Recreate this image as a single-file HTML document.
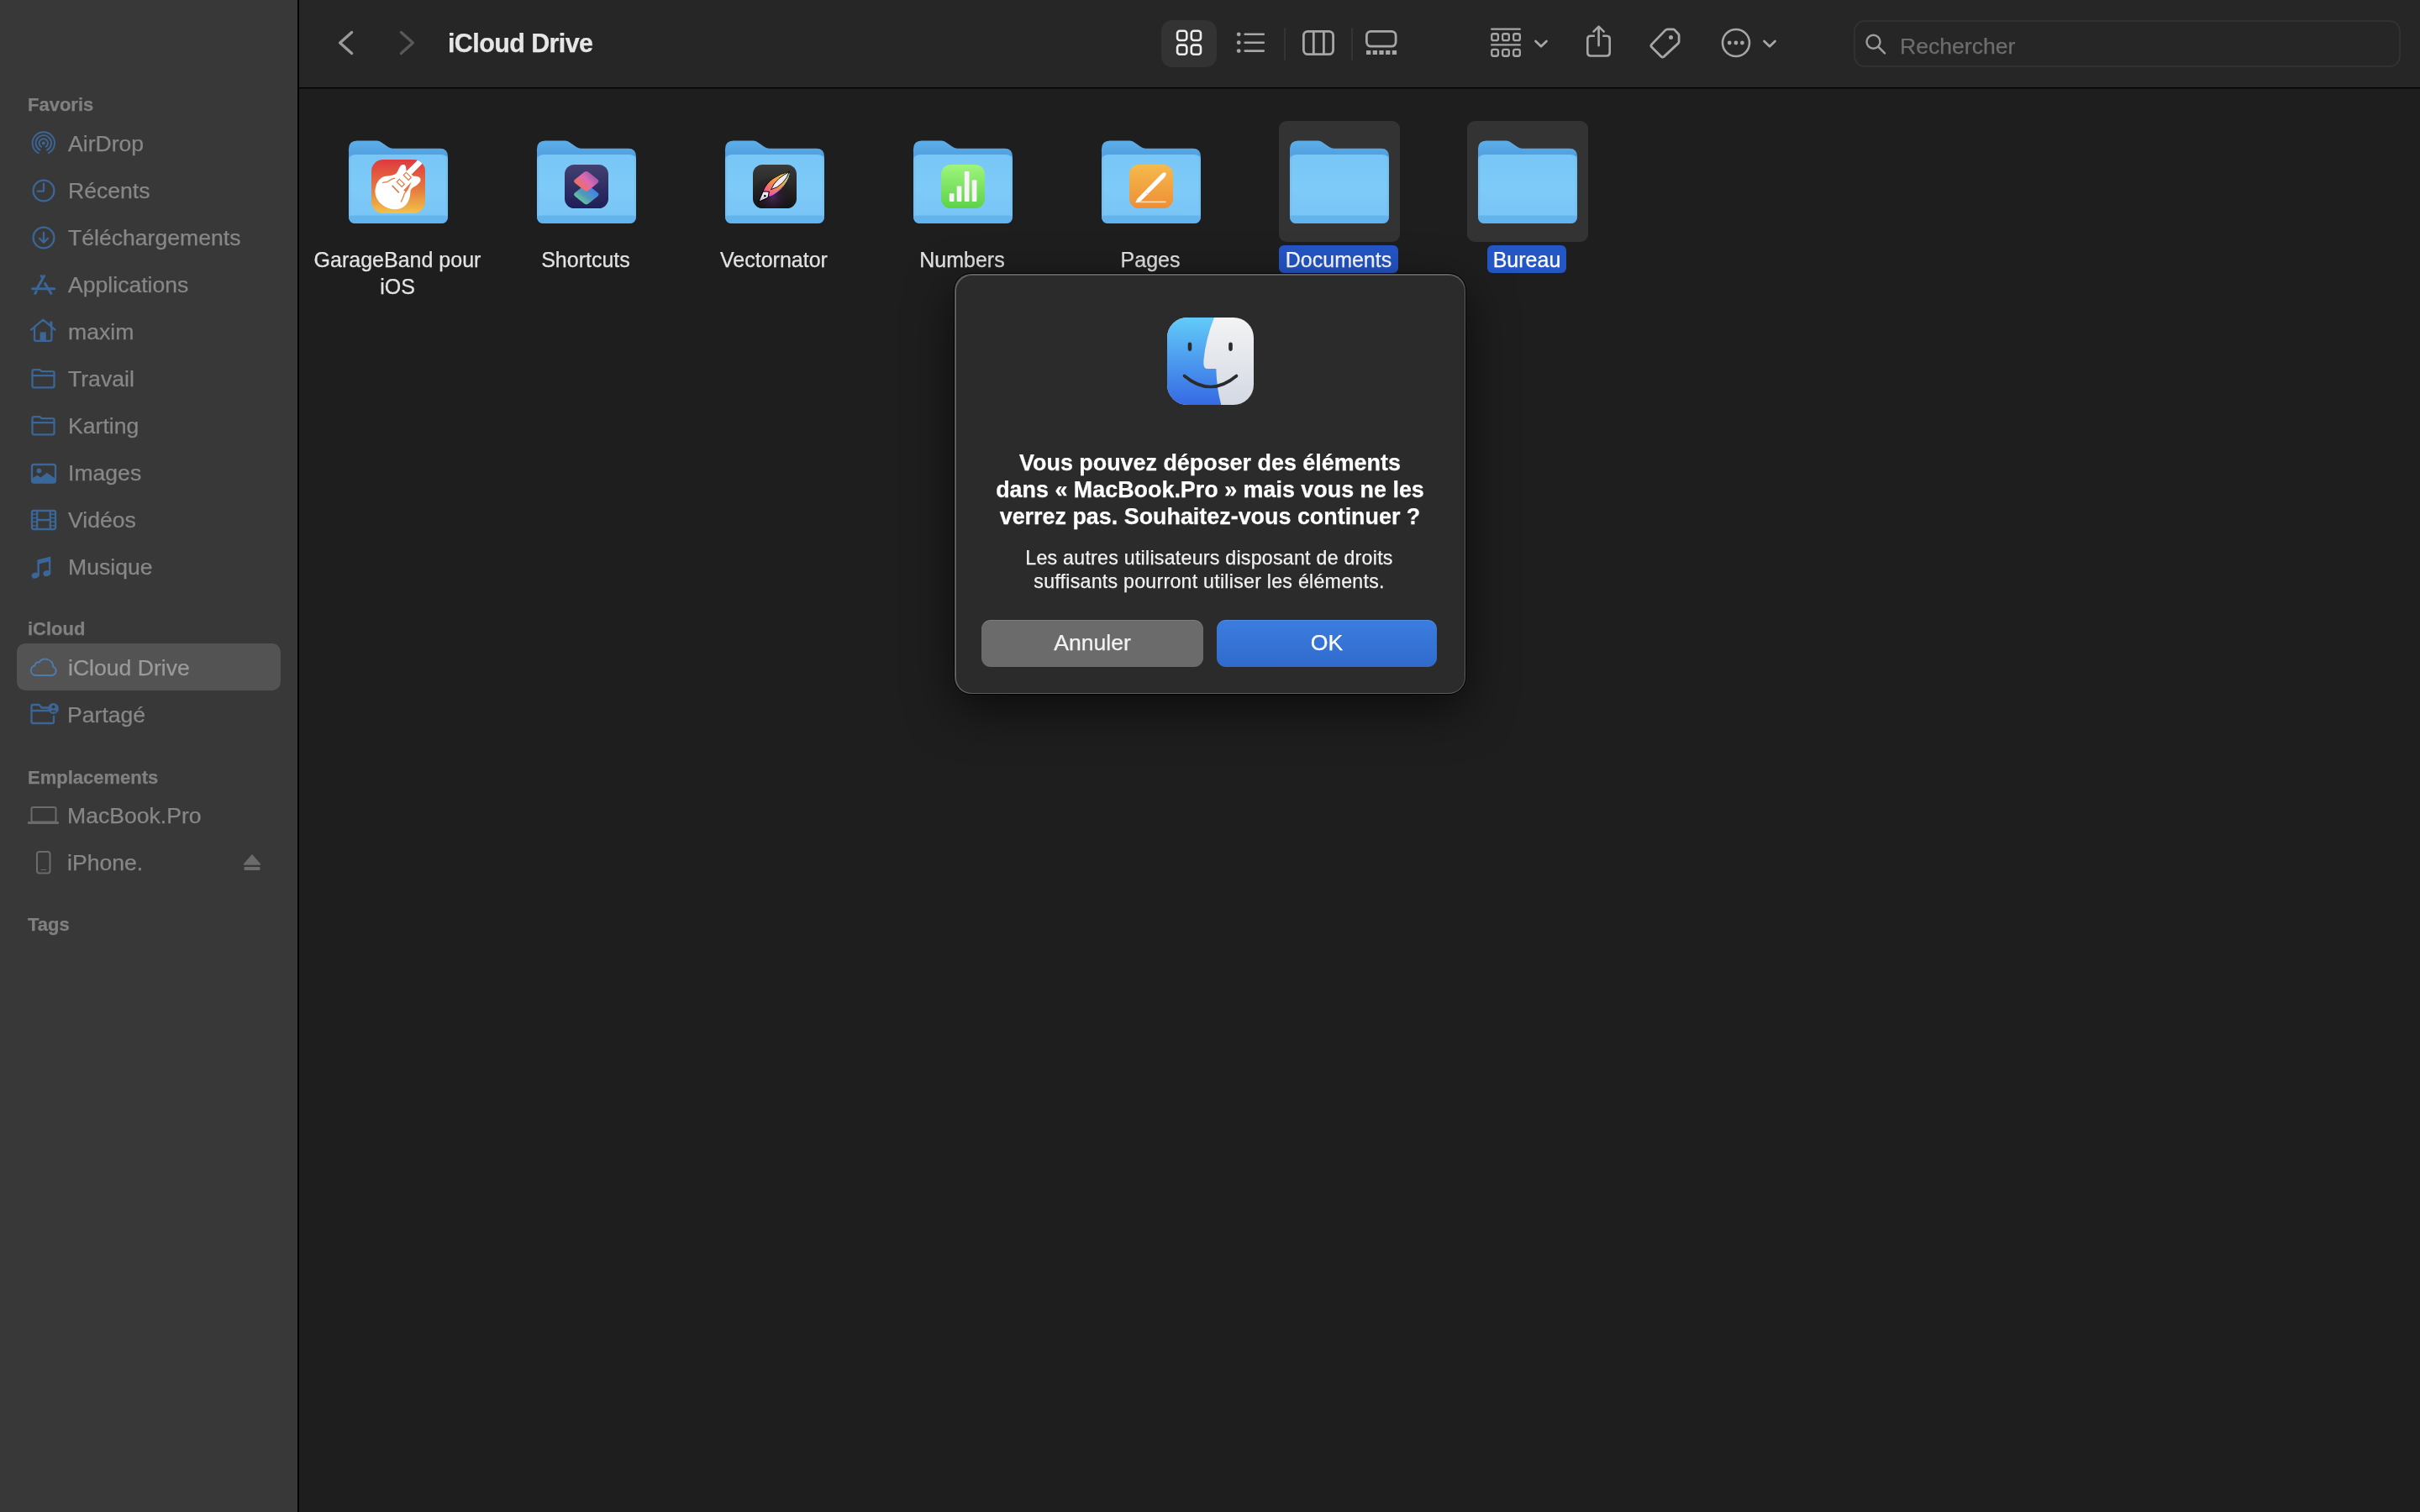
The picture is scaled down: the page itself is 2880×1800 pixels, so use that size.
<!DOCTYPE html>
<html><head><meta charset="utf-8"><title>Finder - iCloud Drive</title>
<style>
html,body{margin:0;padding:0;}
body{width:2880px;height:1800px;position:relative;overflow:hidden;background:#1e1e1e;font-family:"Liberation Sans", sans-serif;}
.t{position:absolute;white-space:nowrap;will-change:transform;-webkit-text-stroke:0.25px currentColor;}
svg{overflow:visible}
</style></head><body>
<div id="sidebar" style="position:absolute;left:0;top:0;width:354px;height:1800px;background:#383838"></div>
<div style="position:absolute;left:354px;top:0;width:2px;height:1800px;background:#000"></div>
<div style="position:absolute;left:20px;top:766px;width:314px;height:56px;border-radius:10px;background:#535353"></div>
<div class="t" style="left:33px;top:114.38px;font-size:22px;line-height:22px;color:#808080;font-weight:700;">Favoris</div>
<div class="t" style="left:81px;top:158.48px;font-size:26.6px;line-height:26.6px;color:#878787;">AirDrop</div>
<div class="t" style="left:81px;top:214.48px;font-size:26.6px;line-height:26.6px;color:#878787;">Récents</div>
<div class="t" style="left:81px;top:270.48px;font-size:26.6px;line-height:26.6px;color:#878787;">Téléchargements</div>
<div class="t" style="left:81px;top:326.48px;font-size:26.6px;line-height:26.6px;color:#878787;">Applications</div>
<div class="t" style="left:81px;top:382.48px;font-size:26.6px;line-height:26.6px;color:#878787;">maxim</div>
<div class="t" style="left:81px;top:438.48px;font-size:26.6px;line-height:26.6px;color:#878787;">Travail</div>
<div class="t" style="left:81px;top:494.48px;font-size:26.6px;line-height:26.6px;color:#878787;">Karting</div>
<div class="t" style="left:81px;top:550.48px;font-size:26.6px;line-height:26.6px;color:#878787;">Images</div>
<div class="t" style="left:81px;top:606.48px;font-size:26.6px;line-height:26.6px;color:#878787;">Vidéos</div>
<div class="t" style="left:81px;top:662.48px;font-size:26.6px;line-height:26.6px;color:#878787;">Musique</div>
<div class="t" style="left:33px;top:738.38px;font-size:22px;line-height:22px;color:#808080;font-weight:700;">iCloud</div>
<div class="t" style="left:80.5px;top:782.48px;font-size:26.6px;line-height:26.6px;color:#9a9a9a;">iCloud Drive</div>
<div class="t" style="left:80px;top:837.98px;font-size:26.6px;line-height:26.6px;color:#878787;">Partagé</div>
<div class="t" style="left:33px;top:915.38px;font-size:22px;line-height:22px;color:#808080;font-weight:700;">Emplacements</div>
<div class="t" style="left:80px;top:958.48px;font-size:26.6px;line-height:26.6px;color:#878787;">MacBook.Pro</div>
<div class="t" style="left:80px;top:1014.48px;font-size:26.6px;line-height:26.6px;color:#878787;">iPhone.</div>
<div class="t" style="left:33px;top:1090.38px;font-size:22px;line-height:22px;color:#808080;font-weight:700;">Tags</div>
<svg style="position:absolute;left:0;top:0" width="354" height="1200" viewBox="0 0 354 1200"><g fill="none" stroke="#3b6698" stroke-width="1.9" stroke-linecap="round"><path d="M45.81,182.16 A13.2,13.2 0 1 1 57.79,182.16"/><path d="M47.60,178.64 A9.25,9.25 0 1 1 56.00,178.64"/><path d="M49.04,174.81 A5.2,5.2 0 1 1 54.56,174.81"/></g><circle cx="51.8" cy="170.4" r="2" fill="#3b6698"/><g fill="none" stroke="#3b6698" stroke-width="2.3" stroke-linecap="round" stroke-linejoin="round" stroke-width="1.9"><circle cx="52" cy="227" r="12.4"/><path d="M52,218.6 V227.6 H44.6"/></g><g fill="none" stroke="#3b6698" stroke-width="2.3" stroke-linecap="round" stroke-linejoin="round" stroke-width="1.9"><circle cx="52" cy="283" r="12.4"/><path d="M52,276.8 V288.8 M47,283.8 L52,288.8 L57,283.8"/></g><g fill="none" stroke="#3b6698" stroke-width="3" stroke-linecap="round"><path d="M52.6,328.6 L44.9,342"/><path d="M43.3,346.8 L41.8,349.4"/><path d="M49.2,328.6 L50.4,330.8 M53.6,337.6 L60.8,349.4"/><path d="M38.6,343.7 H64.8"/></g><g fill="none" stroke="#3b6698" stroke-width="2.3" stroke-linecap="round" stroke-linejoin="round" stroke-width="2"><path d="M37,392.6 L51.3,380.6 L65.5,392.6"/><path d="M41,389.4 V403.8 Q41,405.8 43,405.8 H59.4 Q61.4,405.8 61.4,403.8 V389.4"/></g><rect x="59.2" y="382.6" width="3.2" height="6.8" fill="#3b6698"/><rect x="47.6" y="395.4" width="7.2" height="10.4" fill="#3b6698"/><g fill="none" stroke="#3b6698" stroke-width="2.3" stroke-linecap="round" stroke-linejoin="round" stroke-width="2"><path d="M38.5,459.3 V442.2 Q38.5,440.2 40.5,440.2 H46.5 Q47.6,440.2 48.4,441 L49.2,441.8 Q50,442.2 51,442.2 H62.5 Q64.5,442.2 64.5,444.2 V459.3 Q64.5,461.3 62.5,461.3 H40.5 Q38.5,461.3 38.5,459.3 Z"/><path d="M38.5,447.1 H64.5"/></g><g fill="none" stroke="#3b6698" stroke-width="2.3" stroke-linecap="round" stroke-linejoin="round" stroke-width="2"><path d="M38.5,515.3 V498.2 Q38.5,496.2 40.5,496.2 H46.5 Q47.6,496.2 48.4,497 L49.2,497.8 Q50,498.2 51,498.2 H62.5 Q64.5,498.2 64.5,500.2 V515.3 Q64.5,517.3 62.5,517.3 H40.5 Q38.5,517.3 38.5,515.3 Z"/><path d="M38.5,503.1 H64.5"/></g><g fill="none" stroke="#3b6698" stroke-width="2.3" stroke-linecap="round" stroke-linejoin="round" stroke-width="2.1"><rect x="38" y="553" width="28" height="21.5" rx="2.5"/></g><circle cx="46.4" cy="560.4" r="2.9" fill="#3b6698"/><path d="M38,569.5 L44.4,565.8 L48.4,568.4 L55.8,562.8 L66,569.8 V572 Q66,575 63.5,575 H40.5 Q38,575 38,572 Z" fill="#3b6698"/><g fill="none" stroke="#3b6698" stroke-width="2.3" stroke-linecap="round" stroke-linejoin="round" stroke-width="1.9"><rect x="38" y="608" width="28" height="22" rx="2"/><path d="M44.2,608 V630 M59.8,608 V630 M44.2,619 H59.8"/></g><rect x="39" y="611.45" width="4.5" height="1.5" fill="#3b6698"/><rect x="60.5" y="611.45" width="4.5" height="1.5" fill="#3b6698"/><rect x="39" y="615.85" width="4.5" height="1.5" fill="#3b6698"/><rect x="60.5" y="615.85" width="4.5" height="1.5" fill="#3b6698"/><rect x="39" y="620.45" width="4.5" height="1.5" fill="#3b6698"/><rect x="60.5" y="620.45" width="4.5" height="1.5" fill="#3b6698"/><rect x="39" y="625.05" width="4.5" height="1.5" fill="#3b6698"/><rect x="60.5" y="625.05" width="4.5" height="1.5" fill="#3b6698"/><path d="M44.4,666.5 L60.3,662.6 V684 H58 V668.6 L46.9,671.2 V686 H44.4 Z" fill="#3b6698"/><ellipse cx="41.9" cy="685.2" rx="4.3" ry="3.5" transform="rotate(-15 41.9 685.2)" fill="#3b6698"/><ellipse cx="55.6" cy="682.6" rx="4.3" ry="3.5" transform="rotate(-15 55.6 682.6)" fill="#3b6698"/><path d="M42.4,804 H61.6 A5.4,5.4 0 0 0 63.2,793.6 A9.1,9.1 0 0 0 46.6,788.6 A3.7,3.7 0 0 0 41.6,792.5 A5.8,5.8 0 0 0 42.4,804 Z" fill="none" stroke="#4e7ab0" stroke-width="1.9" stroke-linejoin="round"/><g fill="none" stroke="#3b6698" stroke-width="2.3" stroke-linecap="round" stroke-linejoin="round" stroke-width="2.1"><path d="M37.5,859 V841 Q37.5,839 39.5,839 H46.5 L49.5,842.5 H57"/><path d="M37.5,846 H57"/><path d="M37.5,859 Q37.5,861 39.5,861 H62 Q64,861 64,859 V853"/></g><circle cx="63.5" cy="843.5" r="6.5" fill="#3b6698"/><circle cx="63.5" cy="841.5" r="2" fill="#383838"/><path d="M59.8,847.5 Q63.5,843.5 67.2,847.5" fill="#383838"/><rect x="37.5" y="961" width="29" height="17.5" rx="2" fill="none" stroke="#6b6b6b" stroke-width="2"/><rect x="33" y="978" width="37" height="3" rx="1" fill="#6b6b6b"/><rect x="44" y="1014" width="15.5" height="25.5" rx="3" fill="none" stroke="#6b6b6b" stroke-width="2"/><rect x="48.5" y="1035" width="6.5" height="1" fill="#6b6b6b"/><path d="M290.5,1029 L300,1018 L309.5,1029 Z" fill="#6b6b6b" stroke="#6b6b6b" stroke-width="1.5" stroke-linejoin="round"/><rect x="290.5" y="1032" width="19" height="4" rx="1" fill="#6b6b6b"/></svg>
<div style="position:absolute;left:356px;top:0;width:2524px;height:104px;background:#262626"></div>
<div style="position:absolute;left:356px;top:104px;width:2524px;height:1px;background:#000"></div><div style="position:absolute;left:356px;top:105px;width:2524px;height:1px;background:#111"></div>
<svg style="position:absolute;left:0;top:0" width="2880" height="104" viewBox="0 0 2880 104"><path d="M418.6,38.4 L404.6,51 L418.6,63.6" fill="none" stroke="#9a9a9a" stroke-width="3.3" stroke-linecap="round" stroke-linejoin="round"/><path d="M477.4,38.4 L491.4,51 L477.4,63.6" fill="none" stroke="#595959" stroke-width="3.3" stroke-linecap="round" stroke-linejoin="round"/><rect x="1382" y="24" width="66" height="56" rx="13" fill="#333333"/><g fill="none" stroke="#ececec" stroke-width="2.6"><rect x="1401.1" y="36.8" width="11.2" height="11.2" rx="3"/><rect x="1417.8" y="36.8" width="11.2" height="11.2" rx="3"/><rect x="1401.1" y="53.6" width="11.2" height="11.2" rx="3"/><rect x="1417.8" y="53.6" width="11.2" height="11.2" rx="3"/></g><g fill="#a6a6a6"><circle cx="1474.2" cy="40.8" r="2.4"/><circle cx="1474.2" cy="50.7" r="2.4"/><circle cx="1474.2" cy="60.6" r="2.4"/></g><g stroke="#a6a6a6" stroke-width="2.6" stroke-linecap="round"><path d="M1481.7,40.8 H1503.8 M1481.7,50.7 H1503.8 M1481.7,60.6 H1503.8"/></g><rect x="1528.3" y="33" width="1.5" height="38.5" fill="#3a3a3a"/><rect x="1608.3" y="33" width="1.5" height="38.5" fill="#3a3a3a"/><g fill="none" stroke="#a6a6a6" stroke-width="2.8"><rect x="1551.4" y="37.4" width="35.2" height="27.2" rx="5"/><path d="M1563.3,37.4 V64.6 M1575.4,37.4 V64.6"/></g><rect x="1626.4" y="37.4" width="34.7" height="17.7" rx="5" fill="none" stroke="#a6a6a6" stroke-width="2.8"/><rect x="1626.0" y="60" width="5.3" height="5" fill="#a6a6a6"/><rect x="1633.7" y="60" width="5.3" height="5" fill="#a6a6a6"/><rect x="1641.4" y="60" width="5.3" height="5" fill="#a6a6a6"/><rect x="1649.1" y="60" width="5.3" height="5" fill="#a6a6a6"/><rect x="1656.8" y="60" width="5.3" height="5" fill="#a6a6a6"/><g stroke="#a6a6a6" stroke-width="2.4" fill="none" stroke-linecap="round"><path d="M1775.2,34.6 H1808.8 M1775.2,53.4 H1808.8"/></g><g stroke="#a6a6a6" stroke-width="2.3" fill="none"><rect x="1775.25" y="40.25" width="7.7" height="7.85" rx="2.2"/><rect x="1775.25" y="58.90" width="7.7" height="7.85" rx="2.2"/><rect x="1788.15" y="40.25" width="7.7" height="7.85" rx="2.2"/><rect x="1788.15" y="58.90" width="7.7" height="7.85" rx="2.2"/><rect x="1801.15" y="40.25" width="7.7" height="7.85" rx="2.2"/><rect x="1801.15" y="58.90" width="7.7" height="7.85" rx="2.2"/></g><path d="M1827.5,49 L1834,55.3 L1840.5,49" fill="none" stroke="#a6a6a6" stroke-width="2.8" stroke-linecap="round" stroke-linejoin="round"/><g fill="none" stroke="#a6a6a6" stroke-width="2.6" stroke-linejoin="round"><path d="M1897.9,42.7 H1893 Q1889.3,42.7 1889.3,46.4 V62.8 Q1889.3,66.5 1893,66.5 H1912 Q1915.7,66.5 1915.7,62.8 V46.4 Q1915.7,42.7 1912,42.7 H1907.2"/></g><g fill="none" stroke="#a6a6a6" stroke-width="2.6" stroke-linecap="round" stroke-linejoin="round"><path d="M1902.6,54.2 V32.6 M1896.5,37.6 L1902.6,31.6 L1908.7,37.6"/></g><path d="M1984.5,34.8 H1990.9 Q1992.1,34.8 1992.9,35.6 L1997.3,40.2 Q1998.1,41 1998.1,42.2 V49.6 Q1998.1,50.8 1997.2,51.6 L1980.2,67.4 Q1978.5,68.9 1976.9,67.3 L1965.6,56.1 Q1964.1,54.5 1965.6,52.9 L1982,35.9 Q1983,34.8 1984.5,34.8 Z" fill="none" stroke="#a6a6a6" stroke-width="2.8" stroke-linejoin="round"/><circle cx="1988.5" cy="44.5" r="2.5" fill="#a6a6a6"/><circle cx="2066" cy="51" r="16" fill="none" stroke="#a6a6a6" stroke-width="2.6"/><g fill="#a6a6a6"><circle cx="2058.2" cy="51" r="2.4"/><circle cx="2065.9" cy="51" r="2.4"/><circle cx="2073.4" cy="51" r="2.4"/></g><path d="M2099.5,49 L2106,55.3 L2112.5,49" fill="none" stroke="#a6a6a6" stroke-width="2.8" stroke-linecap="round" stroke-linejoin="round"/><rect x="2207" y="25" width="649" height="54" rx="12" fill="#262626" stroke="#363636" stroke-width="1.5"/><circle cx="2229.5" cy="49.8" r="8" fill="none" stroke="#9c9c9c" stroke-width="2.4"/><path d="M2235.5,55.8 L2243,63.3" stroke="#9c9c9c" stroke-width="2.6" stroke-linecap="round"/></svg>
<div class="t" style="left:533px;top:36.18px;font-size:30.5px;line-height:30.5px;color:#e6e6e6;font-weight:700;letter-spacing:-0.6px;">iCloud Drive</div>
<div class="t" style="left:2261px;top:42.48px;font-size:26.6px;line-height:26.6px;color:#6d6d6d;">Rechercher</div>
<div style="position:absolute;left:1522px;top:144px;width:144px;height:144px;border-radius:9px;background:#333333"></div>
<div style="position:absolute;left:1746px;top:144px;width:144px;height:144px;border-radius:9px;background:#333333"></div>
<div style="position:absolute;left:1522px;top:292px;width:142px;height:33px;border-radius:6px;background:#2456c6"></div>
<div style="position:absolute;left:1770px;top:292px;width:94px;height:33px;border-radius:6px;background:#2456c6"></div>
<svg style="position:absolute;left:0;top:0" width="2880" height="330" viewBox="0 0 2880 330"><defs><linearGradient id="fback" x1="0" y1="0" x2="0" y2="1"><stop offset="0" stop-color="#5eaee8"/><stop offset="1" stop-color="#3f8fdb"/></linearGradient><linearGradient id="ffront" x1="0" y1="0" x2="0" y2="1"><stop offset="0" stop-color="#78c6f6"/><stop offset="0.5" stop-color="#7ecbf9"/><stop offset="1" stop-color="#76c3f5"/></linearGradient><linearGradient id="gb" x1="0" y1="0" x2="0" y2="1"><stop offset="0" stop-color="#e0393f"/><stop offset="0.55" stop-color="#e57a3e"/><stop offset="1" stop-color="#f2c24b"/></linearGradient><linearGradient id="sc" x1="0" y1="0" x2="0" y2="1"><stop offset="0" stop-color="#424170"/><stop offset="1" stop-color="#1f1d58"/></linearGradient><linearGradient id="sc1" x1="0.1" y1="0.8" x2="0.9" y2="0.2"><stop offset="0" stop-color="#f0704a"/><stop offset="0.55" stop-color="#e068b4"/><stop offset="1" stop-color="#8e5aa8"/></linearGradient><linearGradient id="sc2" x1="0.2" y1="1" x2="0.9" y2="0.3"><stop offset="0" stop-color="#70d890"/><stop offset="0.5" stop-color="#4f9ab8"/><stop offset="1" stop-color="#3f80f2"/></linearGradient><linearGradient id="vn" x1="0" y1="0" x2="0" y2="1"><stop offset="0" stop-color="#3a3a3a"/><stop offset="1" stop-color="#151515"/></linearGradient><linearGradient id="vnf" x1="0" y1="1" x2="1" y2="0"><stop offset="0" stop-color="#f040c0"/><stop offset="0.45" stop-color="#f08a50"/><stop offset="0.75" stop-color="#f0e040"/><stop offset="1" stop-color="#60e0f0"/></linearGradient><linearGradient id="nm" x1="0" y1="0" x2="0" y2="1"><stop offset="0" stop-color="#9ff57c"/><stop offset="1" stop-color="#5cd24a"/></linearGradient><linearGradient id="pg" x1="0" y1="0" x2="0" y2="1"><stop offset="0" stop-color="#f5ba4c"/><stop offset="1" stop-color="#ef8e35"/></linearGradient></defs><g transform="translate(415,167)"><path d="M0,10.6 Q0,0.6 10,0.6 H33.5 Q36.5,0.6 39,2.4 L47,8.1 Q49.5,9.8 52.5,9.8 H108.5 Q118,9.8 118,19.3 V40 H0 Z" fill="url(#fback)"/><path d="M0,25 Q0,16.9 8,16.9 H110 Q118,16.9 118,25 V90.5 Q118,99 109.5,99 H8.5 Q0,99 0,90.5 Z" fill="url(#ffront)"/><path d="M0,88.3 H118 V90.5 Q118,99 109.5,99 H8.5 Q0,99 0,90.5 Z" fill="#5eb0ec" opacity="0.85"/><rect x="0" y="88.3" width="118" height="1.2" fill="#86cdf6" opacity="0.8"/><rect x="0" y="19" width="2.5" height="69" fill="#6dbcf2" opacity="0.5"/><rect x="115.5" y="19" width="2.5" height="69" fill="#6dbcf2" opacity="0.5"/></g><g transform="translate(639,167)"><path d="M0,10.6 Q0,0.6 10,0.6 H33.5 Q36.5,0.6 39,2.4 L47,8.1 Q49.5,9.8 52.5,9.8 H108.5 Q118,9.8 118,19.3 V40 H0 Z" fill="url(#fback)"/><path d="M0,25 Q0,16.9 8,16.9 H110 Q118,16.9 118,25 V90.5 Q118,99 109.5,99 H8.5 Q0,99 0,90.5 Z" fill="url(#ffront)"/><path d="M0,88.3 H118 V90.5 Q118,99 109.5,99 H8.5 Q0,99 0,90.5 Z" fill="#5eb0ec" opacity="0.85"/><rect x="0" y="88.3" width="118" height="1.2" fill="#86cdf6" opacity="0.8"/><rect x="0" y="19" width="2.5" height="69" fill="#6dbcf2" opacity="0.5"/><rect x="115.5" y="19" width="2.5" height="69" fill="#6dbcf2" opacity="0.5"/></g><g transform="translate(863,167)"><path d="M0,10.6 Q0,0.6 10,0.6 H33.5 Q36.5,0.6 39,2.4 L47,8.1 Q49.5,9.8 52.5,9.8 H108.5 Q118,9.8 118,19.3 V40 H0 Z" fill="url(#fback)"/><path d="M0,25 Q0,16.9 8,16.9 H110 Q118,16.9 118,25 V90.5 Q118,99 109.5,99 H8.5 Q0,99 0,90.5 Z" fill="url(#ffront)"/><path d="M0,88.3 H118 V90.5 Q118,99 109.5,99 H8.5 Q0,99 0,90.5 Z" fill="#5eb0ec" opacity="0.85"/><rect x="0" y="88.3" width="118" height="1.2" fill="#86cdf6" opacity="0.8"/><rect x="0" y="19" width="2.5" height="69" fill="#6dbcf2" opacity="0.5"/><rect x="115.5" y="19" width="2.5" height="69" fill="#6dbcf2" opacity="0.5"/></g><g transform="translate(1087,167)"><path d="M0,10.6 Q0,0.6 10,0.6 H33.5 Q36.5,0.6 39,2.4 L47,8.1 Q49.5,9.8 52.5,9.8 H108.5 Q118,9.8 118,19.3 V40 H0 Z" fill="url(#fback)"/><path d="M0,25 Q0,16.9 8,16.9 H110 Q118,16.9 118,25 V90.5 Q118,99 109.5,99 H8.5 Q0,99 0,90.5 Z" fill="url(#ffront)"/><path d="M0,88.3 H118 V90.5 Q118,99 109.5,99 H8.5 Q0,99 0,90.5 Z" fill="#5eb0ec" opacity="0.85"/><rect x="0" y="88.3" width="118" height="1.2" fill="#86cdf6" opacity="0.8"/><rect x="0" y="19" width="2.5" height="69" fill="#6dbcf2" opacity="0.5"/><rect x="115.5" y="19" width="2.5" height="69" fill="#6dbcf2" opacity="0.5"/></g><g transform="translate(1311,167)"><path d="M0,10.6 Q0,0.6 10,0.6 H33.5 Q36.5,0.6 39,2.4 L47,8.1 Q49.5,9.8 52.5,9.8 H108.5 Q118,9.8 118,19.3 V40 H0 Z" fill="url(#fback)"/><path d="M0,25 Q0,16.9 8,16.9 H110 Q118,16.9 118,25 V90.5 Q118,99 109.5,99 H8.5 Q0,99 0,90.5 Z" fill="url(#ffront)"/><path d="M0,88.3 H118 V90.5 Q118,99 109.5,99 H8.5 Q0,99 0,90.5 Z" fill="#5eb0ec" opacity="0.85"/><rect x="0" y="88.3" width="118" height="1.2" fill="#86cdf6" opacity="0.8"/><rect x="0" y="19" width="2.5" height="69" fill="#6dbcf2" opacity="0.5"/><rect x="115.5" y="19" width="2.5" height="69" fill="#6dbcf2" opacity="0.5"/></g><g transform="translate(1535,167)"><path d="M0,10.6 Q0,0.6 10,0.6 H33.5 Q36.5,0.6 39,2.4 L47,8.1 Q49.5,9.8 52.5,9.8 H108.5 Q118,9.8 118,19.3 V40 H0 Z" fill="url(#fback)"/><path d="M0,25 Q0,16.9 8,16.9 H110 Q118,16.9 118,25 V90.5 Q118,99 109.5,99 H8.5 Q0,99 0,90.5 Z" fill="url(#ffront)"/><path d="M0,88.3 H118 V90.5 Q118,99 109.5,99 H8.5 Q0,99 0,90.5 Z" fill="#5eb0ec" opacity="0.85"/><rect x="0" y="88.3" width="118" height="1.2" fill="#86cdf6" opacity="0.8"/><rect x="0" y="19" width="2.5" height="69" fill="#6dbcf2" opacity="0.5"/><rect x="115.5" y="19" width="2.5" height="69" fill="#6dbcf2" opacity="0.5"/></g><g transform="translate(1759,167)"><path d="M0,10.6 Q0,0.6 10,0.6 H33.5 Q36.5,0.6 39,2.4 L47,8.1 Q49.5,9.8 52.5,9.8 H108.5 Q118,9.8 118,19.3 V40 H0 Z" fill="url(#fback)"/><path d="M0,25 Q0,16.9 8,16.9 H110 Q118,16.9 118,25 V90.5 Q118,99 109.5,99 H8.5 Q0,99 0,90.5 Z" fill="url(#ffront)"/><path d="M0,88.3 H118 V90.5 Q118,99 109.5,99 H8.5 Q0,99 0,90.5 Z" fill="#5eb0ec" opacity="0.85"/><rect x="0" y="88.3" width="118" height="1.2" fill="#86cdf6" opacity="0.8"/><rect x="0" y="19" width="2.5" height="69" fill="#6dbcf2" opacity="0.5"/><rect x="115.5" y="19" width="2.5" height="69" fill="#6dbcf2" opacity="0.5"/></g><clipPath id="gbc"><rect width="64" height="64" rx="14"/></clipPath><g transform="translate(442,190)"><rect width="64" height="64" rx="14" fill="url(#gb)"/><g clip-path="url(#gbc)"><path d="M43,17.5 L66,-5.5" stroke="#fff" stroke-width="6.8"/></g><path d="M50.3,19.8 C53,19.5 57.5,19.8 58.4,22.9 C59.2,26.2 56,29.2 50.5,32.6 C47.2,34.6 46.6,36.2 46.4,38.4 C46.1,44.5 45,50.2 39.3,55.6 C33.6,60.6 21.5,61.2 12.2,53.3 C4,46.2 3.2,37.8 5.8,30.2 C8,24.2 12,20.2 17.5,19.7 C22.5,19.3 26.5,18.8 29.2,16.8 C31.4,14.8 32.2,11 34.4,7.8 C36.2,5.4 39.2,5.3 40.4,7.2 C41.6,9.2 41.1,12.1 41.8,13.8 Z" fill="#fff"/><g fill="none" stroke="#e6773f" stroke-width="1.2"><rect x="38.6" y="17.6" width="8.4" height="4.4" transform="rotate(45 42.8 19.8)"/><rect x="30.6" y="25.6" width="8.4" height="4.4" transform="rotate(45 34.8 27.8)"/><path d="M13.2,27.8 Q15,26.6 17.5,27 Q20.5,26 22.5,24.3 Q25.5,22 28,22.4" stroke-width="1.3"/><path d="M35.4,50.6 Q35.6,48.5 37,46.8 Q38.2,44 38.8,41.6 Q39.6,39.4 40.8,38.8" stroke-width="1.3"/></g><path d="M25.2,31.4 L32.4,39" stroke="#e6773f" stroke-width="1.7" stroke-linecap="round"/><path d="M47.6,26.5 L44.8,33.5 Q43.5,36.5 41.2,39.2 L38.4,36.6 Z" fill="#e6773f"/></g><g transform="translate(672,196)"><rect width="52" height="52" rx="11.5" fill="url(#sc)"/><path d="M23.06,24.71 Q25.80,22.50 28.54,24.71 L39.16,33.29 Q41.90,35.50 39.16,37.71 L28.54,46.29 Q25.80,48.50 23.06,46.29 L12.44,37.71 Q9.70,35.50 12.44,33.29 Z" fill="url(#sc2)"/><path d="M23.06,9.01 Q25.80,6.80 28.54,9.01 L39.16,17.59 Q41.90,19.80 39.16,22.01 L28.54,30.59 Q25.80,32.80 23.06,30.59 L12.44,22.01 Q9.70,19.80 12.44,17.59 Z" fill="url(#sc1)"/></g><defs><linearGradient id="vl" x1="0" y1="1" x2="1" y2="0"><stop offset="0" stop-color="#f43cb4"/><stop offset="0.45" stop-color="#f28a4c"/><stop offset="1" stop-color="#f2ec3c"/></linearGradient><linearGradient id="vr" x1="0" y1="1" x2="1" y2="0"><stop offset="0" stop-color="#e040f0"/><stop offset="0.5" stop-color="#b090f0"/><stop offset="1" stop-color="#50e8f0"/></linearGradient><radialGradient id="vglow" cx="0.45" cy="0.75" r="0.5"><stop offset="0" stop-color="#5a2a6a" stop-opacity="0.7"/><stop offset="1" stop-color="#000" stop-opacity="0"/></radialGradient></defs><g transform="translate(896,196)"><rect width="52" height="52" rx="11.5" fill="url(#vn)"/><rect width="52" height="52" rx="11.5" fill="url(#vglow)"/><path d="M12.1,31.4 Q16,22 24,16.5 Q33,10.5 43.6,8.1 Q44.5,15 37,25 Q30,33.5 20.1,38.1 Z" fill="url(#vl)" stroke="#000" stroke-width="0.9"/><path d="M20.1,38.1 Q30,33.5 37,25 Q44.5,15 43.6,8.1 Q42.5,17 35,26.5 Q28,33.5 18.5,36.5 Z" fill="url(#vr)"/><path d="M21.6,29.6 Q24,23 31,16.5 Q37,11.5 43.2,8.8 Q41.5,15 35.5,21.5 Q29,28 21.6,29.6 Z" fill="#f3eaf4" stroke="#000" stroke-width="0.9"/><path d="M6.6,44.6 L12.1,31.8 L19.3,32.3 L18,39.2 Z" fill="#f1e8f2" stroke="#000" stroke-width="1.1" stroke-linejoin="round"/><circle cx="14.3" cy="37.2" r="1.3" fill="#000"/><path d="M7.5,43.8 L14,37.5" stroke="#555" stroke-width="0.5"/></g><g transform="translate(1120,196)"><rect width="52" height="52" rx="11.5" fill="url(#nm)"/><g fill="#f7f3f8"><rect x="9.8" y="34.3" width="5.7" height="9.7" rx="1"/><rect x="18.7" y="25.4" width="5.7" height="18.6" rx="1"/><rect x="27.8" y="8" width="5.7" height="36" rx="1"/><rect x="36.7" y="18.2" width="5.7" height="25.8" rx="1"/></g></g><g transform="translate(1344,196)"><rect width="52" height="52" rx="11.5" fill="url(#pg)"/><path d="M8,44.3 H43.5" stroke="#fbd9a8" stroke-width="1.8"/><path d="M7.2,45.2 L9.6,40.6 L37.6,11.8 Q41.4,8.2 43.2,9.8 Q44.9,11.6 41.6,15.4 L13.6,43.4 Z" fill="#fdfdfd"/><path d="M20,33 L23.5,36.5" stroke="#c9c2b8" stroke-width="0.8"/></g></svg>
<div class="t" style="left:-527px;width:2000px;text-align:center;top:296.84px;font-size:25px;line-height:25px;color:#e3e3e3;">GarageBand pour</div>
<div class="t" style="left:-527px;width:2000px;text-align:center;top:328.84px;font-size:25px;line-height:25px;color:#e3e3e3;">iOS</div>
<div class="t" style="left:-303.29999999999995px;width:2000px;text-align:center;top:296.84px;font-size:25px;line-height:25px;color:#e3e3e3;">Shortcuts</div>
<div class="t" style="left:-79.29999999999995px;width:2000px;text-align:center;top:296.84px;font-size:25px;line-height:25px;color:#e3e3e3;">Vectornator</div>
<div class="t" style="left:144.70000000000005px;width:2000px;text-align:center;top:296.84px;font-size:25px;line-height:25px;color:#e3e3e3;">Numbers</div>
<div class="t" style="left:368.70000000000005px;width:2000px;text-align:center;top:296.84px;font-size:25px;line-height:25px;color:#e3e3e3;">Pages</div>
<div class="t" style="left:592.7px;width:2000px;text-align:center;top:296.84px;font-size:25px;line-height:25px;color:#ffffff;">Documents</div>
<div class="t" style="left:817px;width:2000px;text-align:center;top:296.84px;font-size:25px;line-height:25px;color:#ffffff;">Bureau</div>
<div style="position:absolute;left:1135px;top:325px;width:610px;height:502px;border-radius:21px;background:#000;box-shadow:0 18px 55px rgba(0,0,0,0.6)"></div>
<div style="position:absolute;left:1136px;top:326px;width:608px;height:500px;border-radius:20px;background:#5e5e5e"></div>
<div style="position:absolute;left:1137.5px;top:327.5px;width:605px;height:497px;border-radius:18.5px;background:#2b2b2b"></div>
<svg style="position:absolute;left:0;top:0" width="2880" height="900" viewBox="0 0 2880 900"><defs><linearGradient id="fb" x1="0" y1="0" x2="0" y2="1"><stop offset="0" stop-color="#62cbf9"/><stop offset="1" stop-color="#3669e4"/></linearGradient><linearGradient id="fw" x1="0" y1="0" x2="0" y2="1"><stop offset="0" stop-color="#f3f3f4"/><stop offset="1" stop-color="#d3d9e3"/></linearGradient><clipPath id="fc"><rect x="0" y="0" width="103" height="104" rx="24"/></clipPath></defs><g transform="translate(1389,378)"><g clip-path="url(#fc)"><rect width="103" height="104" fill="url(#fw)"/><path d="M0,0 H56 Q46,25 43.5,50 Q42.5,61 47,61 H58.3 Q59,85 64.3,104 H0 Z" fill="url(#fb)"/></g><path d="M27,31.8 V37.6 M75.5,31.8 V37.6" stroke="#2b2b2b" stroke-width="4.6" stroke-linecap="round"/><path d="M20.5,69.5 Q51.5,95.5 82.5,69.5" fill="none" stroke="#2b2b2b" stroke-width="3.6" stroke-linecap="round"/></g></svg>
<div class="t" style="left:440px;width:2000px;text-align:center;top:538.23px;font-size:26.9px;line-height:26.9px;color:#ffffff;font-weight:700;">Vous pouvez déposer des éléments</div>
<div class="t" style="left:440px;width:2000px;text-align:center;top:570.23px;font-size:26.9px;line-height:26.9px;color:#ffffff;font-weight:700;">dans « MacBook.Pro » mais vous ne les</div>
<div class="t" style="left:440px;width:2000px;text-align:center;top:602.23px;font-size:26.9px;line-height:26.9px;color:#ffffff;font-weight:700;">verrez pas. Souhaitez-vous continuer ?</div>
<div class="t" style="left:439px;width:2000px;text-align:center;top:653.36px;font-size:23.2px;line-height:23.2px;color:#f2f2f2;letter-spacing:0.25px;">Les autres utilisateurs disposant de droits</div>
<div class="t" style="left:439px;width:2000px;text-align:center;top:681.36px;font-size:23.2px;line-height:23.2px;color:#f2f2f2;letter-spacing:0.25px;">suffisants pourront utiliser les éléments.</div>
<div style="position:absolute;left:1168px;top:738px;width:264px;height:56px;border-radius:11px;background:#6b6b6b;box-shadow:inset 0 1px 0 rgba(255,255,255,0.12)"></div>
<div style="position:absolute;left:1448px;top:738px;width:262px;height:56px;border-radius:11px;background:linear-gradient(#3b7ddf,#306bcc);box-shadow:inset 0 1px 0 rgba(255,255,255,0.12)"></div>
<div class="t" style="left:300px;width:2000px;text-align:center;top:752.48px;font-size:26.6px;line-height:26.6px;color:#f2f2f2;">Annuler</div>
<div class="t" style="left:578.5px;width:2000px;text-align:center;top:752.48px;font-size:26.6px;line-height:26.6px;color:#ffffff;">OK</div>
</body></html>
